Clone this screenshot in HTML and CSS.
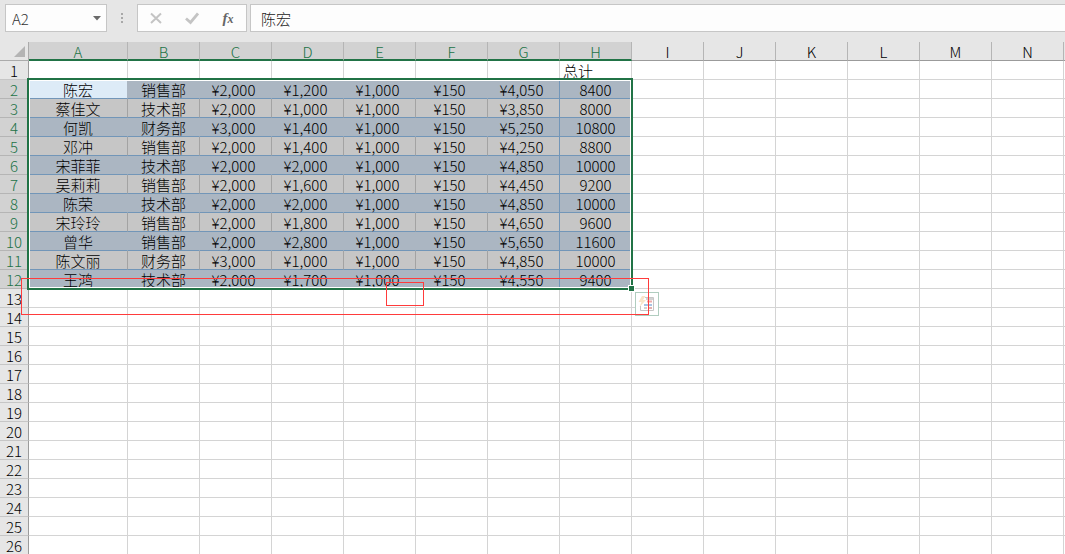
FILE: index.html
```html
<!DOCTYPE html>
<html lang="zh-CN">
<head>
<meta charset="utf-8">
<title>工资表</title>
<link rel="stylesheet" href="styles.css">
</head>
<body>
<header class="formula-bar">
  <div class="name-box">
    <input class="name-input" type="text" value="A2" aria-label="名称框">
    <button class="name-toggle" type="button" aria-label="展开名称框"><svg width="8" height="5" viewBox="0 0 8 5"><path d="M0 0h8L4 4.500z" fill="#6a6a6a"/></svg></button>
  </div>
  <svg class="grip" width="3" height="12" viewBox="0 0 3 12"><path d="M0 1h2v2H0zM0 5h2v2H0zM0 9h2v2H0z" fill="#a8a8a8"/></svg>
  <div class="tools">
    <button type="button" aria-label="取消"><svg width="14" height="14" viewBox="0 0 14 14"><path d="M2 2.500l10 9.500M12 2.500L2 12" stroke="#c4c4c4" stroke-width="2" fill="none"/></svg></button>
    <button type="button" aria-label="输入"><svg width="14" height="14" viewBox="0 0 14 14"><path d="M1 7.500l4.500 4L13 2.500" stroke="#c4c4c4" stroke-width="2.800" fill="none"/></svg></button>
    <button class="fx" type="button" aria-label="插入函数"><i>f<small>x</small></i></button>
  </div>
  <input class="formula" type="text" value="陈宏" aria-label="编辑栏">
</header>
<main class="sheet">
  <table class="grid">
    <colgroup><col class="col-head"><col class="col-first"><col class="col" span="13"><col></colgroup>
    <thead><tr id="letters"><th class="corner"><svg width="12" height="12" viewBox="0 0 12 12"><path d="M11 0v11H0z" fill="#b4b4b4"/></svg></th></tr></thead>
    <tbody id="rows"></tbody>
  </table>
  <div class="selection"><span class="handle"></span></div>
  <button class="quick" type="button" aria-label="快速分析"><svg width="22" height="22" viewBox="0 0 22 22"><path d="M9 4.500h8.500v13h-13V13" fill="none" stroke="#c6c6c6"/><path d="M10 5h7v2h-7z" fill="#d2d2d2"/><path d="M6 3L2.500 9h3L3.500 14l6.500-7H7l2.500-4z" fill="#f9e4c8"/><path d="M11 8.500h5" stroke="#eda9a9" stroke-width="2"/><path d="M8 12h8" stroke="#a9c3e3" stroke-width="2"/><path d="M8 15h3" stroke="#d2d2d2" stroke-width="2"/><path d="M12 15h4" stroke="#e3b0b0" stroke-width="2"/></svg></button>
  <div class="mark mark-wide"></div>
  <div class="mark mark-small"></div>
</main>
<script src="sheet.js"></script>
</body>
</html>
```
FILE: styles.css
```css
* { box-sizing: border-box; }
body {
  margin: 0;
  height: 100vh;
  overflow: hidden;
  background: #e6e6e6;
  color: #000;
  font-family: "Noto Sans CJK SC", sans-serif;
  font-weight: 300;
  font-size: 15px;
}
button, input { font: inherit; border: 0; padding: 0; margin: 0; background: none; }
svg { display: block; }

.formula-bar { display: flex; align-items: center; height: 42px; padding: 4px 0 10px 5px; }
.name-box { display: flex; width: 102px; height: 28px; border: 1px solid #c6c6c6; background: #fdfdfd; }
.name-input { flex: 1; min-width: 0; padding-left: 6px; color: #333; }
.name-toggle { width: 18px; display: flex; align-items: center; justify-content: center; }
.grip { margin: 0 13px 0 14px; }
.tools { display: flex; justify-content: space-around; width: 110px; height: 28px; border: 1px solid #c6c6c6; background: #fdfdfd; }
.tools button { width: 30px; display: flex; align-items: center; justify-content: center; }
.tools .fx { font-family: "Liberation Serif", serif; font-weight: 700; font-size: 15px; color: #666; }
.fx small { font-size: 12px; }
.formula { flex: 1; min-width: 0; height: 28px; margin-left: 3px; padding-left: 10px; border: 1px solid #c6c6c6; border-right: 0; background: #fdfdfd; color: #222; }

.sheet { position: relative; }
.grid { width: 100%; table-layout: fixed; border-collapse: separate; border-spacing: 0; background: #fff; }
.col-head { width: 29px; }
.col-first { width: 99px; }
.col { width: 72px; }
.grid th, .grid td { height: 19px; padding: 2px 0 0; line-height: 16px; white-space: nowrap; border-right: 1px solid #d4d4d4; border-bottom: 1px solid #d4d4d4; }
.grid th { font-weight: 300; background: #e6e6e6; }
.grid thead th { border-bottom-color: #9b9b9b; border-right-color: #b5b5b5; }
.grid thead th.on { background: #d2d2d2; color: #217346; border-bottom: 2px solid #217346; padding-top: 3px; line-height: 14px; }
.grid .corner { border-color: #ababab; }
.corner svg { margin-left: 14px; }
.grid tbody th { border-right-color: #9b9b9b; border-bottom-color: #c6c6c6; }
.grid tbody th.on { background: #d2d2d2; color: #217346; border-bottom-color: #b5b5b5; }
.grid td.label { padding-left: 3px; }
.grid td.text, .grid td.num { text-align: center; }
.grid td.money { padding-right: 4px; }
.grid .picked td.text, .grid .picked td.num { background: #c6c6c6; border-right-color: #a3a3a3; border-bottom-color: #7296b8; }
.grid .band td.text, .grid .band td.num { background: #abb6c2; border-right-color: #abb6c2; }
.grid .picked td:nth-child(8) { border-right-color: #7296b8; }
.grid .band td.active { background: #ddebf7; }
.grid tr > :last-child { border-right: 0; }

.selection { position: absolute; left: 27px; top: 36px; width: 606px; height: 212px; border: 2px solid #217346; box-shadow: inset 0 0 0 1px #fff; }
.handle { position: absolute; right: -4px; bottom: -4px; width: 7px; height: 7px; border: 1px solid #fff; background: #217346; }
.quick { position: absolute; left: 635px; top: 250px; width: 24px; height: 24px; border: 1px solid #b0cdbf; background: #fff; }
.mark { position: absolute; border: 1px solid #ff3b3b; }
.mark-wide { left: 21px; top: 236px; width: 628px; height: 37px; }
.mark-small { left: 386px; top: 240px; width: 38px; height: 24px; }
```
FILE: sheet.js
```js
const letters = "ABCDEFGHIJKLMN".split("");
const people = [
  ["陈宏", "销售部", "¥2,000", "¥1,200", "¥1,000", "¥150", "¥4,050", "8400"],
  ["蔡佳文", "技术部", "¥2,000", "¥1,000", "¥1,000", "¥150", "¥3,850", "8000"],
  ["何凯", "财务部", "¥3,000", "¥1,400", "¥1,000", "¥150", "¥5,250", "10800"],
  ["邓冲", "销售部", "¥2,000", "¥1,400", "¥1,000", "¥150", "¥4,250", "8800"],
  ["宋菲菲", "技术部", "¥2,000", "¥2,000", "¥1,000", "¥150", "¥4,850", "10000"],
  ["吴莉莉", "销售部", "¥2,000", "¥1,600", "¥1,000", "¥150", "¥4,450", "9200"],
  ["陈荣", "技术部", "¥2,000", "¥2,000", "¥1,000", "¥150", "¥4,850", "10000"],
  ["宋玲玲", "销售部", "¥2,000", "¥1,800", "¥1,000", "¥150", "¥4,650", "9600"],
  ["曾华", "销售部", "¥2,000", "¥2,800", "¥1,000", "¥150", "¥5,650", "11600"],
  ["陈文丽", "财务部", "¥3,000", "¥1,000", "¥1,000", "¥150", "¥4,850", "10000"],
  ["王鸿", "技术部", "¥2,000", "¥1,700", "¥1,000", "¥150", "¥4,550", "9400"]
];

function cell(tag, text, cls) {
  const el = document.createElement(tag);
  el.textContent = text;
  if (cls) el.className = cls;
  return el;
}

const head = document.getElementById("letters");
letters.forEach((l, i) => head.append(cell("th", l, i < 8 ? "on" : "")));
head.append(cell("th", ""));

const body = document.getElementById("rows");
for (let r = 1; r <= 26; r++) {
  const tr = document.createElement("tr");
  const person = people[r - 2];
  if (person) tr.className = r % 2 ? "picked" : "picked band";
  tr.append(cell("th", r, person ? "on" : ""));
  for (let c = 0; c < 15; c++) {
    let text = "", cls = "";
    if (person && c < 8) {
      text = person[c];
      cls = c < 2 ? "text" : c < 7 ? "num money" : "num";
      if (r === 2 && c === 0) cls += " active";
    } else if (r === 1 && c === 7) {
      text = "总计";
      cls = "label";
    }
    tr.append(cell("td", text, cls));
  }
  body.append(tr);
}
```
